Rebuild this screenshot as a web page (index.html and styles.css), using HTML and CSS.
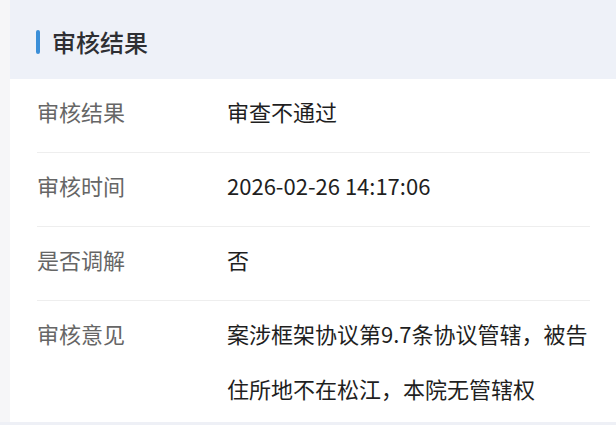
FILE: index.html
```html
<!DOCTYPE html>
<html lang="zh-CN">
<head>
<meta charset="utf-8">
<link rel="stylesheet" href="styles.css">
</head>
<body>
<div class="page">
  <section class="card">
    <header class="card-head">
      <span class="bar"></span>
      <h2 class="title">审核结果</h2>
    </header>
    <div class="rows">
      <div class="row">
        <div class="label">审核结果</div>
        <div class="value">审查不通过</div>
      </div>
      <div class="row">
        <div class="label">审核时间</div>
        <div class="value">2026-02-26 14:17:06</div>
      </div>
      <div class="row">
        <div class="label">是否调解</div>
        <div class="value">否</div>
      </div>
      <div class="row">
        <div class="label">审核意见</div>
        <div class="value">案涉框架协议第9.7条协议管辖，被告住所地不在松江，本院无管辖权</div>
      </div>
    </div>
  </section>
</div>
</body>
</html>
```

FILE: styles.css
```css
html, body {
  margin: 0;
  padding: 0;
  background: #eef0f6;
}
body {
  width: 616px;
  height: 425px;
  overflow: hidden;
  font-family: "Noto Sans CJK SC", "Noto Sans", sans-serif;
}
.page {
  padding-left: 10px;
  background: #f6f6f8;
}
.card {
  background: #ffffff;
}
.card-head {
  height: 74px;
  padding-top: 5px;
  background: #eef1f8;
  display: flex;
  align-items: center;
  padding-left: 26px;
  gap: 12px;
}
.bar {
  width: 4px;
  height: 24px;
  border-radius: 2px;
  background: #3b8fd8;
}
.title {
  margin: 0;
  font-size: 24px;
  font-weight: 500;
  color: #2e2f33;
  line-height: 30px;
}
.rows {
  padding: 0 26px 0 27px;
}
.row {
  display: flex;
  padding: 5px 0 13px;
  border-bottom: 1px solid #eeeeee;
  font-size: 22px;
  line-height: 55px;
}
.row:last-child {
  border-bottom: none;
  padding-bottom: 6px;
}
.label {
  width: 190px;
  flex: none;
  color: #666666;
}
.value {
  flex: 1;
  color: #1f1f1f;
}
```
